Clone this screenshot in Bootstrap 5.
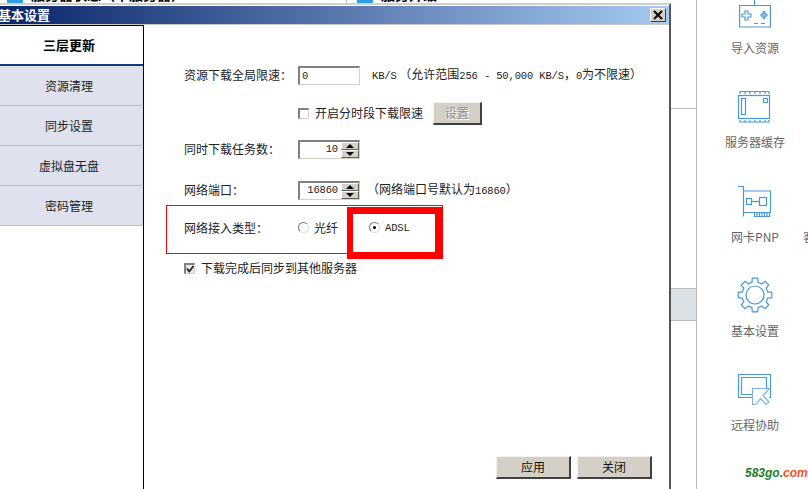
<!DOCTYPE html>
<html lang="zh-CN">
<head>
    <meta charset="UTF-8">
    <meta name="viewport" content="width=device-width, initial-scale=1.0">
    <title>基本设置</title>
    <link href="https://cdn.jsdelivr.net/npm/bootstrap@5.3.3/dist/css/bootstrap.min.css" rel="stylesheet">
    <style>
        html, body { height: 489px; overflow: hidden; background: #fff; }
        body { font-family: "Noto Sans CJK SC", "Liberation Sans", sans-serif; font-size: 12px; line-height: 18px; color: #222; }
        .lat { font-family: "Liberation Mono", monospace; font-size: 10.5px; letter-spacing: -.15px; }

        /* window behind the dialog */
        .back-strip { height: 3px; overflow: hidden; width: 671px; background: #fff; }
        .back-seg { width: 347px; border-right: 1px solid #bbb; padding-left: 7px; }
        .back-seg2 { padding-left: 10px; }
        .back-txt { margin-top: -15px; font-size: 14px; font-weight: 700; color: #000; white-space: nowrap; }
        .back-ico { width: 16px; height: 16px; background: #2f9fdc; margin-top: -13px; flex: none; }

        /* dialog */
        .dlg { width: 671px; height: 486px; border-top: 2px solid #cfcfcf; border-right: 2px solid #555; display: flex; flex-direction: column; }
        .dlg-title { height: 18px; margin-top: 1px; padding-right: 3px; background: linear-gradient(90deg, #0a246a, #a6caf0); color: #fff; font-size: 13px; font-weight: 700; }
        .dlg-title span { margin-left: -2px; }
        .x-btn { width: 16px; height: 14px; padding: 0; background: #d4d0c8; border: 1px solid; border-color: #fff #404040 #404040 #fff; border-radius: 0; line-height: 0; }
        .dlg-inner { border-top: 1px solid #c8c8c8; flex: 1; min-height: 0; }
        .side-tabs { width: 144px; border-top: 1px solid #000; border-right: 1px solid #000; font-size: 12px; }
        .side-tab { height: 40px; padding-right: 5px; background: #dfe2ee; border-bottom: 1px solid #bcbcc4; color: #222; }
        .side-tab.on { background: #fff; font-weight: 700; font-size: 13px; border-bottom: 2px solid #0f3a80; color: #000; }
        .pane { padding-left: 40px; padding-top: 41px; position: relative; }
        .field-row { height: 18px; }
        .lbl { width: 114px; flex: none; }
        .num-in { width: 62px; height: 19px; padding: 0 2px; border: 1px solid; border-width: 2px 1px 1px 2px; border-color: #808080 #d4d0c8 #d4d0c8 #808080; border-radius: 0; box-shadow: none; font-family: "Liberation Mono", monospace; font-size: 10.5px; color: #222; background: #fff; }
        .spin { width: 62px; height: 19px; border: 1px solid; border-width: 2px 1px 1px 2px; border-color: #808080 #d4d0c8 #d4d0c8 #808080; background: #fff; }
        .spin .val { flex: 1; padding-right: 3px; line-height: 15px; text-align: right; }
        .spin-btns { width: 18px; }
        .spin-btns i { flex: 1; display: flex; align-items: center; justify-content: center; background: #d4d0c8; border: 1px solid; border-color: #fff #606060 #606060 #fff; }
        .tri-up, .tri-dn { width: 0; height: 0; border-left: 4px solid transparent; border-right: 4px solid transparent; }
        .tri-up { border-bottom: 4px solid #000; }
        .tri-dn { border-top: 4px solid #000; }
        .chk { width: 11px; height: 11px; border: 1px solid; border-width: 2px 1px 1px 2px; border-color: #808080 #d4d0c8 #d4d0c8 #808080; background: #fff; flex: none; line-height: 0; margin-right: 6px; }
        .chk.done { background: #ececec; }
        .rad { width: 11px; height: 11px; border-radius: 50%; border: 1px solid; border-color: #777 #ddd #ddd #777; background: #fff; flex: none; margin-right: 5px; }
        .rad.sel::after { content: ""; display: block; width: 3px; height: 3px; margin: 3px; background: #000; border-radius: 50%; }
        .win-btn { background: #d4d0c8; border: 1px solid; border-color: #f4f2ee #404040 #404040 #f4f2ee; border-width: 1px 2px 2px 1px; border-radius: 0; font-size: 12px; line-height: 18px; padding: 0; color: #111; }
        .win-btn:disabled { background: #d4d0c8; color: #8e8c86; border-color: #f4f2ee #404040 #404040 #f4f2ee; opacity: 1; text-shadow: 1px 1px 0 #fff; }
        .set-row { margin-top: 17px; height: 24px; }
        .spin-a { margin-top: 15px; }
        .spin-b { margin-top: 23px; }
        .port-note { margin-left: 7px; white-space: nowrap; }
        .set-btn { width: 49px; height: 23px; margin-left: 10px; }
        .foot-btn { width: 75px; height: 23px; }
        .red-thin { width: 277px; height: 49px; margin-top: 6px; margin-left: -18px; padding-left: 17px; padding-bottom: 4px; border: 1px solid #f00; position: relative; }
        .red-thick { position: absolute; left: 180px; top: 1px; width: 96px; height: 52px; border: solid #f00; border-width: 7px 8px 7px 6px; }
        .last-row { margin-top: 5px; }
        .adsl-rad { margin-left: 31px; }
        .foot-bar { position: absolute; right: 17px; bottom: 10px; gap: 6px; }

        /* app side */
        .gutter { width: 26px; border-right: 1px solid #bbb; padding-top: 108px; }
        .gut-line { height: 1px; background: #bbb; }
        .gut-block { height: 33px; margin-top: 179px; background: #dce1e5; border-top: 1px solid #bbb; border-bottom: 1px solid #bbb; }
        .side-col { width: 111px; padding-left: 5px; position: relative; color: #666; text-align: center; }
        .tool { display: flow-root; height: 94.25px; position: relative; }
        .tool svg { display: block; margin: -6px auto 0; width: 36px; height: 36px; fill: none; stroke: #4a98d8; stroke-width: 1.2; }
        .tool-lbl { margin-top: 9px; display: block; }
        .tool-cut { position: absolute; left: 101px; top: 39px; white-space: nowrap; }
        .water { margin-top: -6px; padding-left: 43px; text-align: left; font: italic 700 12px/16px "Liberation Sans", sans-serif; color: #1d7d2c; }
        .water b { color: #f0502a; }
    </style>
</head>
<body>
<div class="d-flex">

    <!-- dialog and what is left of the window behind it -->
    <div>
        <div class="back-strip d-flex">
            <div class="back-seg d-flex gap-2">
                <div class="back-ico"></div>
                <div class="back-txt">服务器状态（单服务器）</div>
            </div>
            <div class="back-seg2 d-flex gap-2">
                <div class="back-ico"></div>
                <div class="back-txt">服务升级</div>
            </div>
        </div>
        <div class="dlg">
            <div class="dlg-title d-flex align-items-center justify-content-between">
                <span>基本设置</span>
                <button class="x-btn" type="button" aria-label="Close">
                    <svg width="14" height="12" viewBox="0 0 14 12"><path d="M3 2 L11 10 M11 2 L3 10" stroke="#000" stroke-width="2" fill="none"/></svg>
                </button>
            </div>
            <div class="dlg-inner d-flex">
                <div class="side-tabs nav flex-column">
                    <div class="side-tab on d-flex align-items-center justify-content-center">三层更新</div>
                    <div class="side-tab d-flex align-items-center justify-content-center">资源清理</div>
                    <div class="side-tab d-flex align-items-center justify-content-center">同步设置</div>
                    <div class="side-tab d-flex align-items-center justify-content-center">虚拟盘无盘</div>
                    <div class="side-tab d-flex align-items-center justify-content-center">密码管理</div>
                </div>
                <div class="pane flex-grow-1">
                    <div class="field-row d-flex align-items-center">
                        <div class="lbl">资源下载全局限速：</div>
                        <input class="form-control num-in" type="text" value="0">
                        <div class="ms-2 ps-1 text-nowrap"><span class="lat">KB/S</span>&nbsp;（允许范围<span class="lat">256 - 50,000 KB/S</span>，<span class="lat">0</span>为不限速）</div>
                    </div>
                    <div class="field-row d-flex align-items-center set-row">
                        <div class="lbl"></div>
                        <span class="chk"></span>
                        <div class="text-nowrap">开启分时段下载限速</div>
                        <button class="btn win-btn set-btn" type="button" disabled>设置</button>
                    </div>
                    <div class="field-row d-flex align-items-center spin-a">
                        <div class="lbl">同时下载任务数：</div>
                        <div class="spin d-flex">
                            <div class="val lat">10</div>
                            <div class="spin-btns d-flex flex-column"><i><span class="tri-up"></span></i><i><span class="tri-dn"></span></i></div>
                        </div>
                    </div>
                    <div class="field-row d-flex align-items-center spin-b">
                        <div class="lbl">网络端口：</div>
                        <div class="spin d-flex">
                            <div class="val lat">16860</div>
                            <div class="spin-btns d-flex flex-column"><i><span class="tri-up"></span></i><i><span class="tri-dn"></span></i></div>
                        </div>
                        <div class="port-note">（网络端口号默认为<span class="lat">16860</span>）</div>
                    </div>
                    <div class="red-thin d-flex align-items-center">
                        <div class="lbl">网络接入类型：</div>
                        <span class="rad"></span><div>光纤</div>
                        <span class="rad sel adsl-rad"></span><div class="lat">ADSL</div>
                        <div class="red-thick"></div>
                    </div>
                    <div class="field-row d-flex align-items-center last-row">
                        <span class="chk done">
                            <svg width="9" height="9" viewBox="0 0 9 9"><path d="M1 3.5 L3.2 6.5 L7.5 1" stroke="#222" stroke-width="1.8" fill="none"/></svg>
                        </span>
                        <div>下载完成后同步到其他服务器</div>
                    </div>
                    <div class="foot-bar d-flex">
                        <button class="btn win-btn foot-btn" type="button">应用</button>
                        <button class="btn win-btn foot-btn" type="button">关闭</button>
                    </div>
                </div>
            </div>
        </div>
    </div>

    <!-- strip between dialog and toolbar -->
    <div class="gutter">
        <div class="gut-line"></div>
        <div class="gut-block"></div>
    </div>

    <!-- toolbar on the right -->
    <div class="side-col">
        <div class="tool">
            <svg viewBox="0 0 36 36"><path d="M17.5 6 V11 M2.6 11.5 H33.4 V33 H2.6 Z"/><path d="M8 17 H11 V20 H14 V23 H11 V26 H8 V23 H5 V20 H8 Z"/><circle cx="25" cy="21" r="1.1"/><circle cx="29" cy="21" r="1.1"/><circle cx="27" cy="18.5" r="1.1"/><circle cx="27" cy="23.5" r="1.1"/><path d="M17 29.5 H21 M24 29.5 H28"/></svg>
            <span class="tool-lbl">导入资源</span>
        </div>
        <div class="tool">
            <svg viewBox="0 0 36 36"><rect x="1.5" y="7.5" width="31" height="23"/><path d="M3 6 V3.5 H32 V6 M8 3.5 V6 M13 3.5 V6 M18 3.5 V6 M23 3.5 V6 M28 3.5 V6"/><path d="M3 32 V34 H32 V32 M8 32 V34 M13 32 V34 M18 32 V34 M23 32 V34 M28 32 V34"/><rect x="4.5" y="10.5" width="4" height="16"/><rect x="26.5" y="10.5" width="4" height="4"/></svg>
            <span class="tool-lbl">服务器缓存</span>
        </div>
        <div class="tool">
            <svg viewBox="0 0 36 36"><path d="M1 3.5 H6.5 V33.5 M6.5 8 H33.5 V29.5 H6.5"/><rect x="9.5" y="15.5" width="5" height="6"/><rect x="22.5" y="14.5" width="7" height="8"/><path d="M14.5 18.5 H22.5"/><path d="M17.5 29.5 V33.5 H32.5 V29.5 M20 30 V33 M22.5 30 V33 M25 30 V33 M27.5 30 V33 M30 30 V33"/></svg>
            <span class="tool-lbl">网卡PNP</span>
            <span class="tool-cut">客户机</span>
        </div>
        <div class="tool">
            <svg viewBox="0 0 36 36"><g transform="translate(1 1)"><path d="M13.9 4.4 L14.3 .2 H19.7 L20.1 4.4 A13 13 0 0 1 23.7 5.9 L27 3.25 L30.75 7 L28.1 10.3 A13 13 0 0 1 29.6 13.9 L33.8 14.3 V19.7 L29.6 20.1 A13 13 0 0 1 28.1 23.7 L30.75 27 L27 30.75 L23.7 28.1 A13 13 0 0 1 20.1 29.6 L19.7 33.8 H14.3 L13.9 29.6 A13 13 0 0 1 10.3 28.1 L7 30.75 L3.25 27 L5.9 23.7 A13 13 0 0 1 4.4 20.1 L.2 19.7 V14.3 L4.4 13.9 A13 13 0 0 1 5.9 10.3 L3.25 7 L7 3.25 L10.3 5.9 A13 13 0 0 1 13.9 4.4 Z"/><circle cx="17" cy="17" r="9"/></g></svg>
            <span class="tool-lbl">基本设置</span>
        </div>
        <div class="tool">
            <svg viewBox="0 0 36 36"><path d="M15 26.5 H1.5 V3.5 H33.5 V26.5 H32"/><path d="M15 23.5 H4.5 V6.5 H29.5 V17"/><path d="M15.5 17.5 H32.5 L26 24.5 L32 31 L29 33.5 L23.5 27.5 L19 33.5 H15.5 Z" stroke="#7db4e4"/></svg>
            <span class="tool-lbl">远程协助</span>
        </div>
        <div class="water">583go.<b>com</b></div>
    </div>
</div>

<script src="https://cdn.jsdelivr.net/npm/bootstrap@5.3.3/dist/js/bootstrap.bundle.min.js"></script>
</body>
</html>
